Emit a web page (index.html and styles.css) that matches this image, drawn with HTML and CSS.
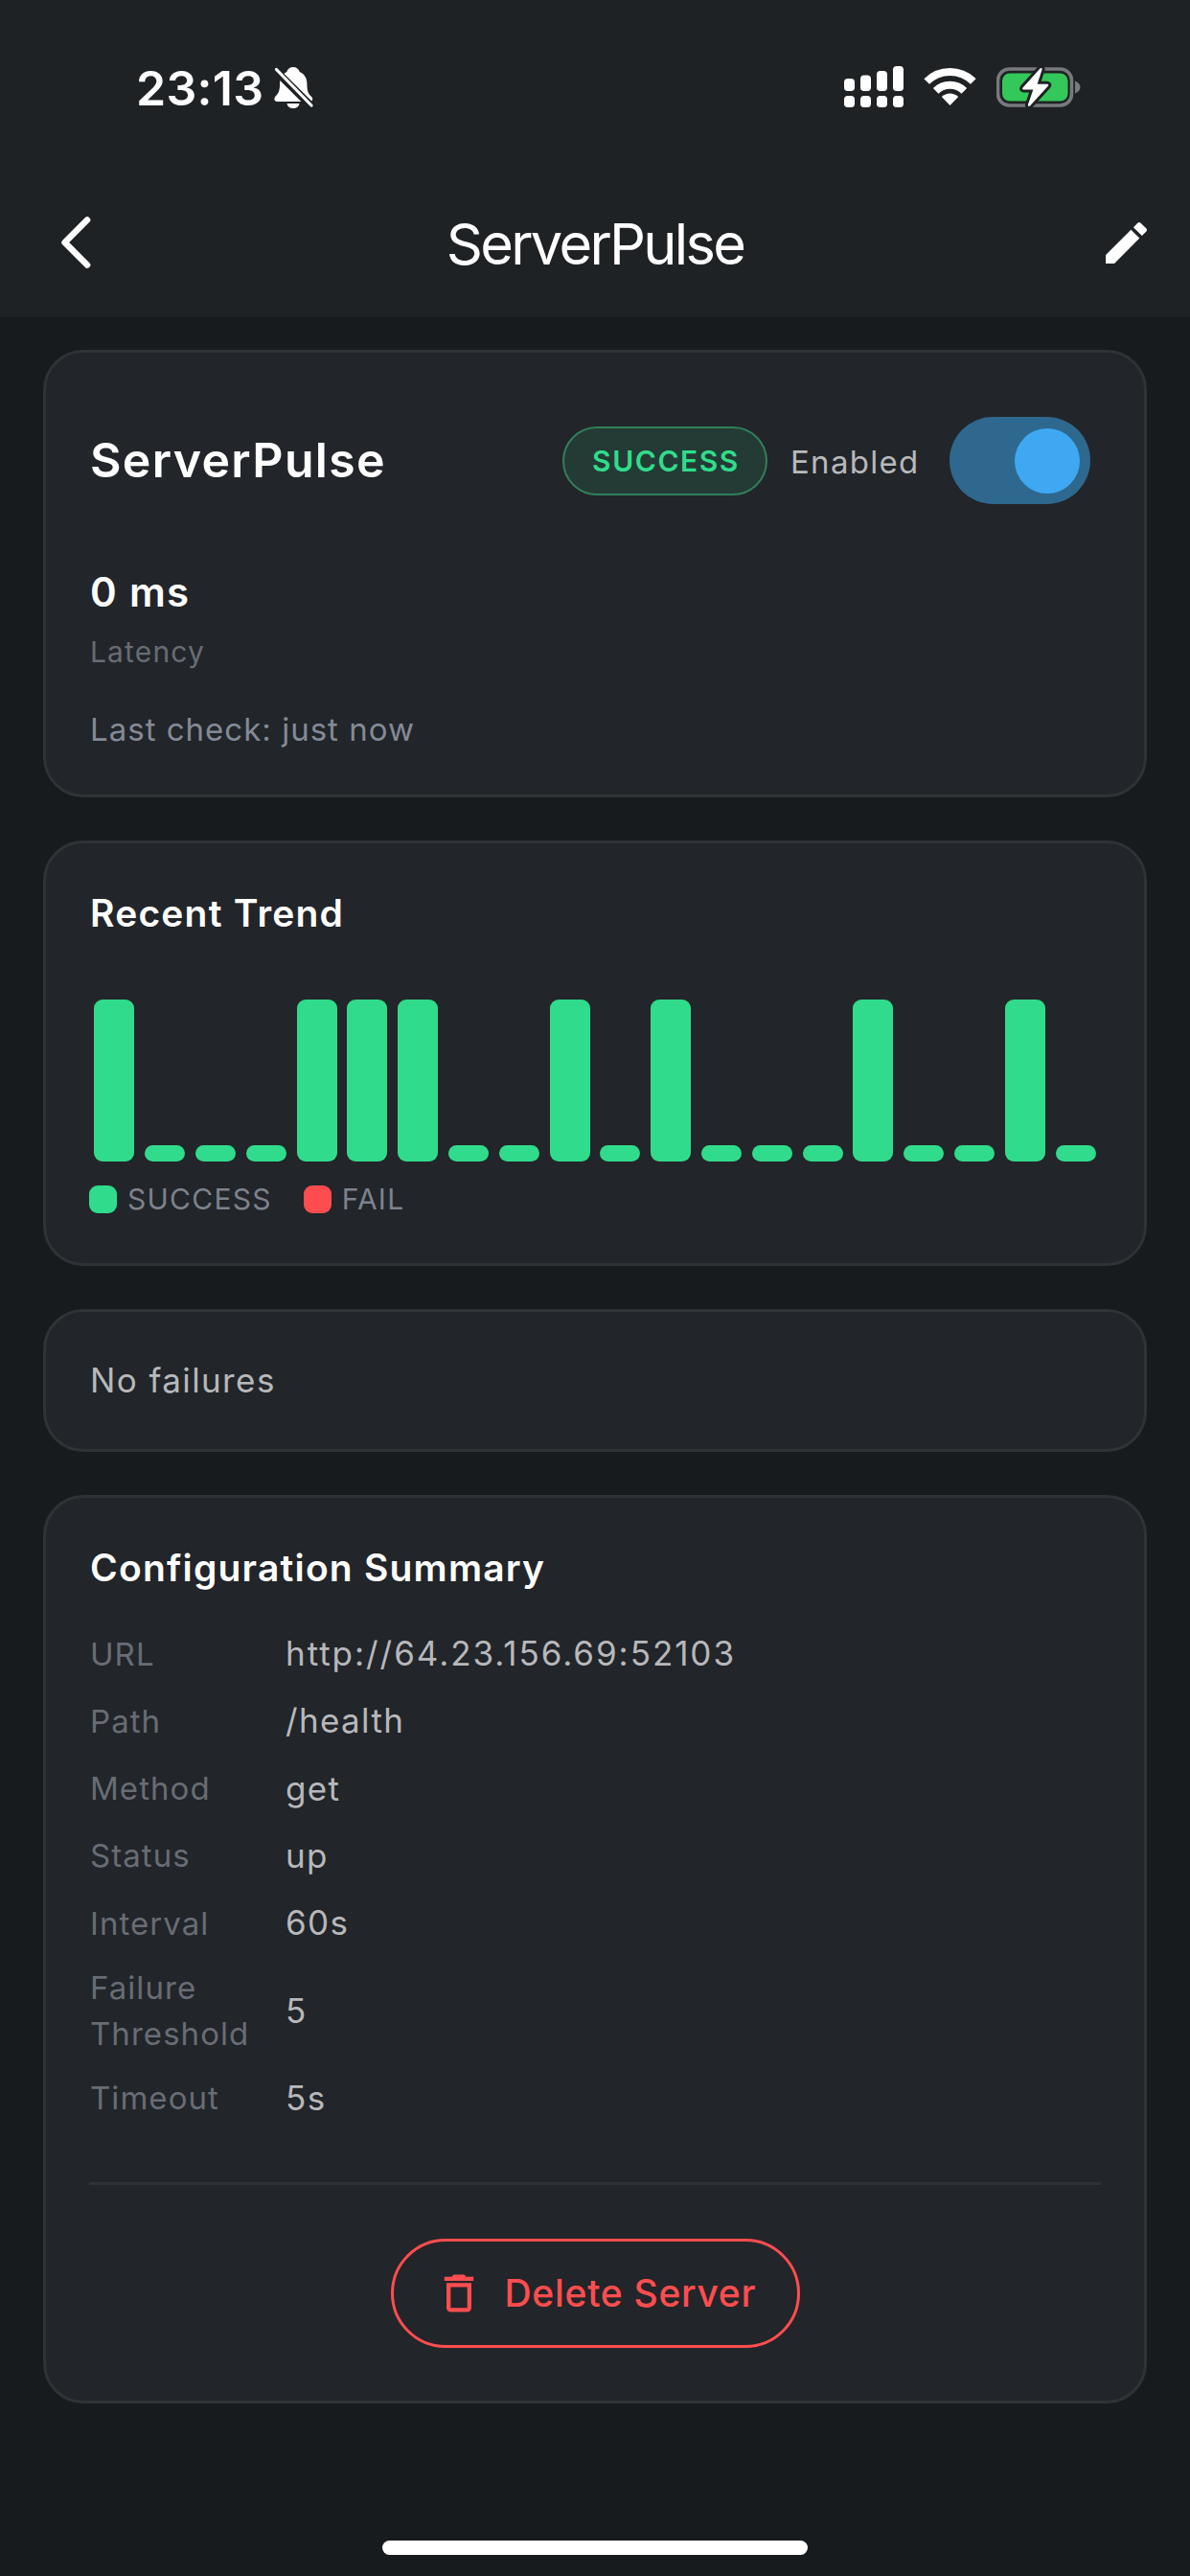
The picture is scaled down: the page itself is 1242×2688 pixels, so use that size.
FILE: index.html
```html
<!DOCTYPE html>
<html lang="en">
<head>
<meta charset="utf-8">
<title>ServerPulse</title>
<link rel="stylesheet" href="styles.css">
</head>
<body>
<div class="screen">
  <header class="header">
    <div class="status-bar">
      <div class="status-left">
        <span class="clock">23:13</span>
        <svg class="bell" viewBox="0 0 42 44" aria-hidden="true">
          <path fill="#fff" d="M20 1c3.400 0 6 2 6.700 5 5.300 2.100 7.700 7 7.700 12 0 8 1.400 11 4.300 13.600 2.700 2.600 1.600 5.400-1.700 5.400H3.500C.2 37-.6 34 1.500 31.600 4.500 28.500 6.100 26 6.100 18c0-5 2.400-9.900 7.200-12C14 3 16.600 1 20 1z"/>
          <path fill="#fff" d="M13.500 39h13c-.3 3-3.200 5-6.500 5s-6.200-2-6.500-5z"/>
          <path stroke="#1f2225" stroke-width="8" d="M1 4l39 39"/>
          <path stroke="#fff" stroke-width="3.200" stroke-linecap="round" d="M2.500 3.500L39 41"/>
        </svg>
      </div>
      <div class="status-right">
        <svg width="63" height="44" viewBox="0 0 63 44" fill="#fff" aria-hidden="true">
          <rect x="1" y="13" width="11" height="13" rx="3.800"/>
          <rect x="18" y="9.500" width="11" height="16.500" rx="3.800"/>
          <rect x="35" y="5" width="11" height="21" rx="3.800"/>
          <rect x="52" y="0" width="11" height="26" rx="3.800"/>
          <rect x="1" y="31" width="11" height="12" rx="3.800"/>
          <rect x="18" y="31" width="11" height="12" rx="3.800"/>
          <rect x="35" y="31" width="11" height="12" rx="3.800"/>
          <rect x="52" y="31" width="11" height="12" rx="3.800"/>
        </svg>
        <svg width="55" height="44" viewBox="0 0 55 44" aria-hidden="true">
          <path fill="none" stroke="#fff" stroke-width="8" d="M3.200 16a34.500 34.500 0 0 1 48.600 0M12.700 25.800a21 21 0 0 1 29.600 0"/>
          <path fill="#fff" d="M27.500 41l-8.700-9a12.500 12.500 0 0 1 17.400 0z"/>
        </svg>
        <svg width="88" height="44" viewBox="0 0 88 44" aria-hidden="true">
          <rect x="1.500" y="3" width="77" height="38" rx="12" fill="none" stroke="#77797c" stroke-width="3.600"/>
          <path fill="#77797c" d="M82 15.500c3.700 1.300 5.500 3.700 5.500 6.500s-1.800 5.200-5.500 6.500z"/>
          <rect x="6" y="7.500" width="68.500" height="29" rx="8" fill="#34c759"/>
          <path fill="#fff" stroke="#1f2225" stroke-width="6" stroke-linejoin="round" d="M45.500 2.500L27.500 22.500c-.8 1-.3 2 .8 2h10l-5.300 15.500c-.5 1.800 1 2.500 2.200 1.200l18.700-20.500c.8-1 .4-2-.8-2h-10.500L47.500 3.700c.5-1.700-.9-2.400-2-1.200z"/>
          <path fill="#fff" d="M45.500 2.500L27.500 22.500c-.8 1-.3 2 .8 2h10l-5.300 15.500c-.5 1.800 1 2.500 2.200 1.200l18.700-20.500c.8-1 .4-2-.8-2h-10.500L47.500 3.700c.5-1.700-.9-2.400-2-1.200z"/>
        </svg>
      </div>
    </div>
    <nav class="nav">
      <svg class="back" viewBox="0 0 32 56" aria-label="Back">
        <path fill="none" stroke="#fff" stroke-width="6.600" stroke-linecap="round" stroke-linejoin="round" d="M28 4.500L4.600 28 28 51.500"/>
      </svg>
      <h1 class="nav-title">ServerPulse</h1>
      <svg class="edit" viewBox="0 0 24 24" fill="#fff" aria-label="Edit">
        <path d="M3 17.250V21h3.750L17.810 9.940l-3.750-3.750L3 17.250zM20.710 7.040a.996.996 0 0 0 0-1.410l-2.340-2.340a.996.996 0 0 0-1.410 0l-1.830 1.830 3.750 3.750 1.830-1.830z"/>
      </svg>
    </nav>
  </header>

  <main class="content">
    <section class="card overview">
      <div class="overview-head">
        <h2 class="server-name">ServerPulse</h2>
        <span class="badge">SUCCESS</span>
        <span class="enabled-label">Enabled</span>
        <span class="toggle"><span class="thumb"></span></span>
      </div>
      <p class="metric">0 ms</p>
      <p class="metric-label">Latency</p>
      <p class="last-check">Last check: just now</p>
    </section>

    <section class="card trend">
      <h3 class="card-title">Recent Trend</h3>
      <div class="chart">
        <i class="bar tall"></i><i class="bar"></i><i class="bar"></i><i class="bar"></i><i class="bar tall"></i>
        <i class="bar tall"></i><i class="bar tall"></i><i class="bar"></i><i class="bar"></i><i class="bar tall"></i>
        <i class="bar"></i><i class="bar tall"></i><i class="bar"></i><i class="bar"></i><i class="bar"></i>
        <i class="bar tall"></i><i class="bar"></i><i class="bar"></i><i class="bar tall"></i><i class="bar"></i>
      </div>
      <div class="legend">
        <span class="swatch"></span><span class="legend-text">SUCCESS</span>
        <span class="swatch fail"></span><span class="legend-text">FAIL</span>
      </div>
    </section>

    <section class="card failures">No failures</section>

    <section class="card config">
      <h3 class="card-title">Configuration Summary</h3>
      <dl class="rows">
        <div class="row"><dt>URL</dt><dd class="url">http://64.23.156.69:52103</dd></div>
        <div class="row"><dt>Path</dt><dd>/health</dd></div>
        <div class="row"><dt>Method</dt><dd>get</dd></div>
        <div class="row"><dt>Status</dt><dd>up</dd></div>
        <div class="row"><dt>Interval</dt><dd>60s</dd></div>
        <div class="row"><dt>Failure Threshold</dt><dd>5</dd></div>
        <div class="row"><dt>Timeout</dt><dd>5s</dd></div>
      </dl>
      <hr class="divider">
      <button class="delete" type="button">
        <svg class="trash" viewBox="0 0 24 24" fill="currentColor" aria-hidden="true">
          <path d="M6 19c0 1.100.9 2 2 2h8c1.100 0 2-.9 2-2V7H6v12zM8 9h8v10H8V9zm7.500-5l-1-1h-5l-1 1H5v2h14V4h-3.500z"/>
        </svg>
        Delete Server
      </button>
    </section>
  </main>
  <div class="home-indicator"></div>
</div>
</body>
</html>
```
FILE: styles.css
```css
* { box-sizing: border-box; margin: 0; padding: 0; }

body {
  background: #181b1e;
  font-family: Inter, "Liberation Sans", sans-serif;
  color: #fff;
}

svg { display: block; flex: none; }

.screen {
  width: 1242px;
  height: 2688px;
  display: flex;
  flex-direction: column;
  background: #181b1e;
}

/* Header */
.header { height: 331px; background: #1f2225; }

.status-bar {
  height: 176px;
  padding: 6px 114px 0 142px;
  display: flex;
  align-items: center;
  justify-content: space-between;
}
.status-left { display: flex; align-items: center; gap: 11px; }
.clock { width: 133px; font-size: 50px; line-height: 60px; font-weight: 600; letter-spacing: .3px; padding-top: 2px; }
.bell { width: 42px; height: 44px; }
.status-right { display: flex; gap: 21px; }

.nav {
  height: 154px;
  padding: 0 38px 0 63px;
  display: grid;
  grid-template-columns: 66px 1fr 57px;
  align-items: center;
}
.back { width: 32px; height: 56px; }
.nav-title {
  text-align: center;
  font-size: 59.500px;
  line-height: 74px;
  font-weight: 400;
  letter-spacing: -2.700px;
  padding: 2px 34px 0 0;
}
.edit { width: 57px; height: 57px; }

/* Cards */
.content {
  flex: 1;
  padding: 34px 45px 0;
  display: flex;
  flex-direction: column;
  gap: 45px;
}
.card {
  background: #222529;
  border: 3px solid #2f3236;
  border-radius: 42px;
  padding: 45px;
}
.card-title { font-size: 39px; line-height: 56px; font-weight: 600; letter-spacing: 1.200px; padding-left: 1px; }

.overview { height: 467px; }
.overview-head { height: 135px; display: flex; align-items: center; }
.server-name { flex: 1; font-size: 50px; line-height: 70px; font-weight: 600; letter-spacing: 1.330px; padding: 0 0 2px 1px; }
.badge {
  width: 214px;
  height: 72px;
  border: 2px solid #30805a;
  border-radius: 36px;
  background: #243a35;
  color: #30dc8b;
  font-size: 30px;
  line-height: 68px;
  font-weight: 600;
  letter-spacing: 1.550px;
  padding-left: 2px;
  text-align: center;
}
.enabled-label { width: 166px; margin-left: 24px; font-size: 33px; line-height: 48px; letter-spacing: 1.280px; color: #b7b8bb; padding-top: 2px; }
.toggle {
  width: 147px;
  height: 91px;
  border-radius: 46px;
  background: #2e688f;
  display: flex;
  align-items: center;
  justify-content: flex-end;
  padding-right: 11px;
  margin-right: 11px;
}
.thumb { width: 68px; height: 68px; border-radius: 50%; background: #3ea9f2; }
.metric { margin-top: 40px; font-size: 42px; line-height: 60px; font-weight: 600; letter-spacing: 1.300px; padding-left: 1px; }
.metric-label { margin-top: 11px; font-size: 30px; line-height: 43px; letter-spacing: 1.150px; color: #686c75; padding-left: 1px; }
.last-check { margin-top: 36px; font-size: 33px; line-height: 47px; letter-spacing: 1.010px; color: #838a97; padding-left: 1px; }

/* Trend chart */
.trend { height: 444px; }
.chart {
  margin-top: 44px;
  height: 187px;
  display: grid;
  grid-template-columns: repeat(20, 1fr);
  align-items: end;
  justify-items: center;
}
.bar { width: 42px; height: 17px; border-radius: 9px; background: #30dc8b; }
.bar.tall { height: 169px; }
.legend { margin-top: 18px; display: flex; align-items: center; line-height: 43px; }
.swatch { width: 29px; height: 29px; border-radius: 9px; background: #30dc8b; }
.swatch.fail { background: #ff4d4f; margin-left: 33px; }
.legend-text { margin-left: 11px; font-size: 30px; letter-spacing: 1.250px; color: #7c828d; }

.failures { height: 149px; padding-left: 46px; line-height: 53px; font-size: 35px; letter-spacing: 1.400px; color: #b7b8bb; }

/* Configuration */
.config { height: 948px; }
.rows { margin-top: 36px; display: flex; flex-direction: column; gap: 18px; }
.row { display: grid; grid-template-columns: 204px 1fr; align-items: center; }
.row dt { padding-left: 1px; font-size: 33px; line-height: 47.200px; letter-spacing: 1.050px; color: #686c75; }
.row dd { padding: 0 0 2px 1px; font-size: 35px; line-height: 50.300px; letter-spacing: 1.350px; color: #b7b8bb; }
.row .url { letter-spacing: 1.950px; }
.divider { margin-top: 61px; height: 3px; border: 0; background: #2f3236; }
.delete {
  width: 427px;
  height: 114px;
  margin: 56px auto 0;
  display: flex;
  align-items: center;
  padding-left: 42px;
  gap: 22px;
  border: 3px solid #ff4d4f;
  border-radius: 57px;
  background: none;
  color: #ff4d4f;
  font: 500 39px/56px Inter, "Liberation Sans", sans-serif;
  letter-spacing: .72px;
  white-space: nowrap;
}
.trash { width: 52px; height: 52px; }

.home-indicator { width: 444px; height: 15px; margin: 0 auto 22px; border-radius: 8px; background: #fff; }
```
